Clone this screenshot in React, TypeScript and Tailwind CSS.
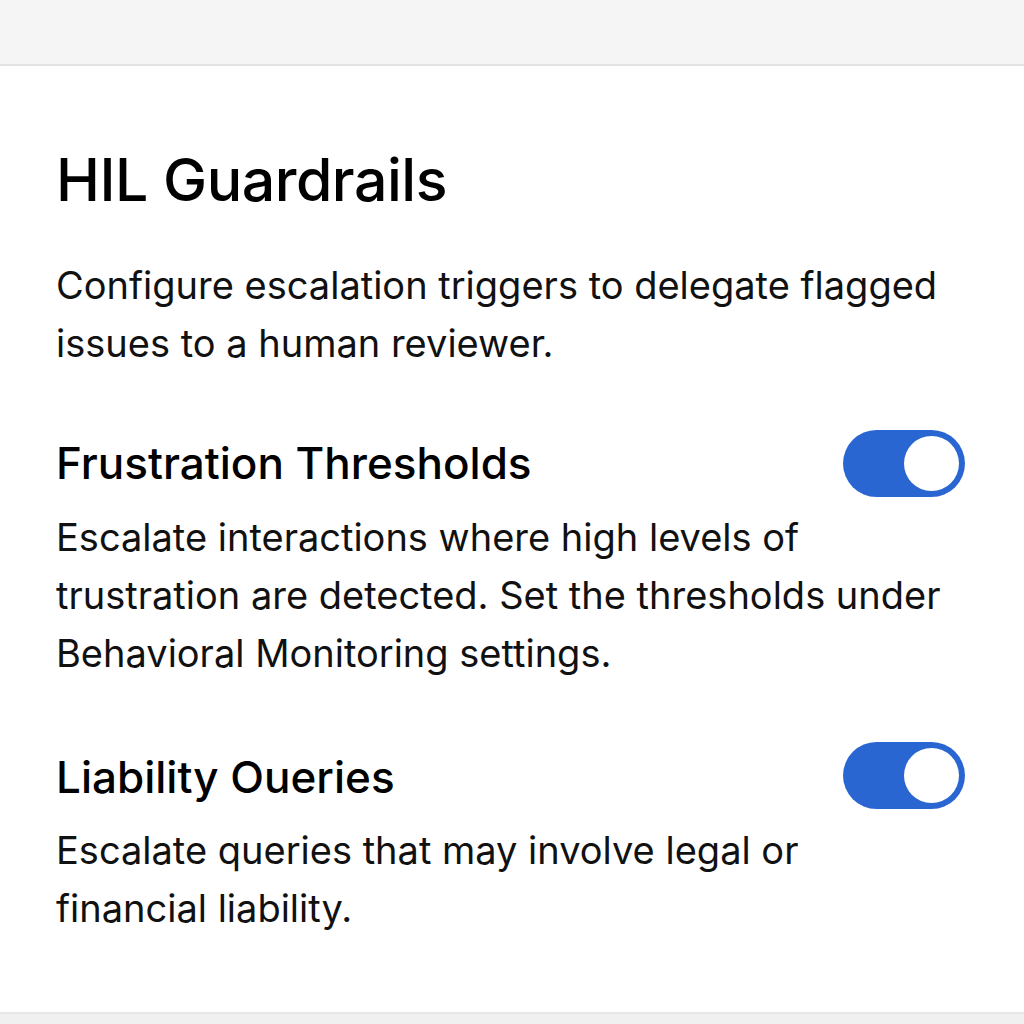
import React from "react";

function Toggle() {
  return (
    <div className="w-[122px] h-[67px] rounded-full bg-[#2a66d1] flex items-center justify-end pr-[6px] shrink-0">
      <div className="w-[55px] h-[55px] rounded-full bg-white" />
    </div>
  );
}

export default function App() {
  return (
    <div className="w-[1024px] h-[1024px] flex flex-col bg-white text-black" style={{ fontFamily: "Inter, 'Noto Sans', sans-serif" }}>
      <div className="h-[66px] bg-[#f5f5f5] border-b-2 border-[#e2e2e2] shrink-0" />
      <div className="flex-1 px-[56px] pt-[82px]">
        <h1 className="text-[59px] leading-[64px] font-medium tracking-[-0.5px] whitespace-nowrap">HIL Guardrails</h1>
        <p className="mt-[44px] text-[38px] leading-[58px] text-[#111] whitespace-nowrap">
          Configure escalation triggers to delegate flagged<br />issues to a human reviewer.
        </p>
        <div className="mt-[62px] h-[58px] flex items-center justify-between pr-[3px]">
          <h2 className="text-[44px] leading-[58px] font-medium whitespace-nowrap">Frustration Thresholds</h2>
          <Toggle />
        </div>
        <p className="mt-[16px] text-[38px] leading-[58px] text-[#111] whitespace-nowrap">
          Escalate interactions where high levels of<br />trustration are detected. Set the thresholds under<br />Behavioral Monitoring settings.
        </p>
        <div className="mt-[64px] h-[58px] flex items-center justify-between pr-[3px]">
          <h2 className="text-[44px] leading-[58px] font-medium whitespace-nowrap translate-y-[2px]">Liability Oueries</h2>
          <Toggle />
        </div>
        <p className="mt-[17px] text-[38px] leading-[58px] text-[#111] whitespace-nowrap">
          Escalate queries that may involve legal or<br />financial liability.
        </p>
      </div>
      <div className="h-[12px] bg-[#f0f0f0] border-t-2 border-[#e6e6e6] shrink-0" />
    </div>
  );
}
